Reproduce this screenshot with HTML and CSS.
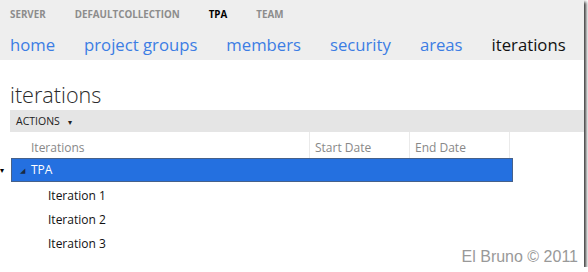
FILE: index.html
```html
<!DOCTYPE html>
<html lang="en">
<head>
    <meta charset="UTF-8">
    <title>iterations</title>
    <link rel="stylesheet" href="styles.css">
</head>
<body>
    <div class="page">
        <div class="top">
            <div class="crumbs">
                <span>SERVER</span>
                <span>DEFAULTCOLLECTION</span>
                <span class="current">TPA</span>
                <span>TEAM</span>
            </div>
            <div class="nav">
                <a href="#">home</a>
                <a href="#">project groups</a>
                <a href="#">members</a>
                <a href="#">security</a>
                <a href="#">areas</a>
                <a href="#" class="active">iterations</a>
            </div>
        </div>

        <h1>iterations</h1>
        <div class="actions">ACTIONS <span class="drop">&#9662;</span></div>

        <div class="grid">
            <div class="head">
                <div class="col name">Iterations</div>
                <div class="col date">Start Date</div>
                <div class="col date">End Date</div>
            </div>
            <div class="row">
                <span class="gutter">&#9662;</span>
                <div class="cell selected"><span class="tri">&#9698;</span>TPA</div>
            </div>
            <div class="row">
                <span class="gutter"></span>
                <div class="cell child">Iteration 1</div>
            </div>
            <div class="row">
                <span class="gutter"></span>
                <div class="cell child">Iteration 2</div>
            </div>
            <div class="row">
                <span class="gutter"></span>
                <div class="cell child">Iteration 3</div>
            </div>
        </div>

        <div class="credit">El Bruno &copy; 2011</div>
    </div>
</body>
</html>
```

FILE: styles.css
```css
body {
    margin: 0;
    background: #fff;
    font-family: "Open Sans", sans-serif;
}
.page {
    position: relative;
    width: 584px;
    height: 267px;
    background: #fff;
    box-shadow: 2px 2px 3px rgba(0,0,0,0.8);
    overflow: hidden;
}
.top {
    background: #eeeeee;
    height: 60px;
    padding-left: 10px;
}
.crumbs {
    display: flex;
    gap: 29px;
    padding-top: 8px;
    height: 14px;
    font-size: 9.8px;
    font-weight: bold;
    color: #8c8c8c;
}
.crumbs .current {
    color: #000;
}
.nav {
    display: flex;
    gap: 29px;
    margin-top: 11px;
    font-size: 16.7px;
    line-height: 24px;
    white-space: nowrap;
}
.nav a {
    color: #3c7de4;
    text-decoration: none;
}
.nav a.active {
    color: #111;
}
h1 {
    margin: 19px 0 0 10px;
    font-size: 21.6px;
    font-weight: 300;
    line-height: 31px;
    color: #2a2a2a;
}
.actions {
    margin-left: 10px;
    height: 22px;
    line-height: 22px;
    padding-left: 6px;
    background: #e5e5e5;
    font-size: 10.5px;
    color: #222;
}
.drop {
    font-size: 8px;
    margin-left: 5px;
}
.grid {
    font-size: 12px;
}
.head {
    display: flex;
    margin-left: 11px;
    height: 26px;
    line-height: 31px;
    color: #888;
}
.col {
    border-right: 1px solid #eaeaea;
    padding-left: 20px;
    box-sizing: border-box;
}
.col.name {
    width: 299px;
}
.col.date {
    width: 100px;
    padding-left: 5px;
}
.row {
    display: flex;
    height: 24px;
}
.gutter {
    width: 11px;
    font-size: 8px;
    line-height: 24px;
    color: #000;
}
.cell {
    width: 502px;
    box-sizing: border-box;
    line-height: 22px;
}
.cell.selected {
    background: #2470e0;
    border: 1px solid #46618a;
    color: #fff;
    padding-left: 8px;
}
.tri {
    font-size: 7px;
    color: #1a2a44;
    margin-right: 6px;
    vertical-align: 1px;
}
.cell.child {
    padding-left: 37px;
    line-height: 28px;
    color: #111;
}
.credit {
    position: absolute;
    right: 6px;
    bottom: 2px;
    font-family: "Liberation Sans", sans-serif;
    font-size: 16px;
    line-height: 16px;
    color: #999;
}
```
